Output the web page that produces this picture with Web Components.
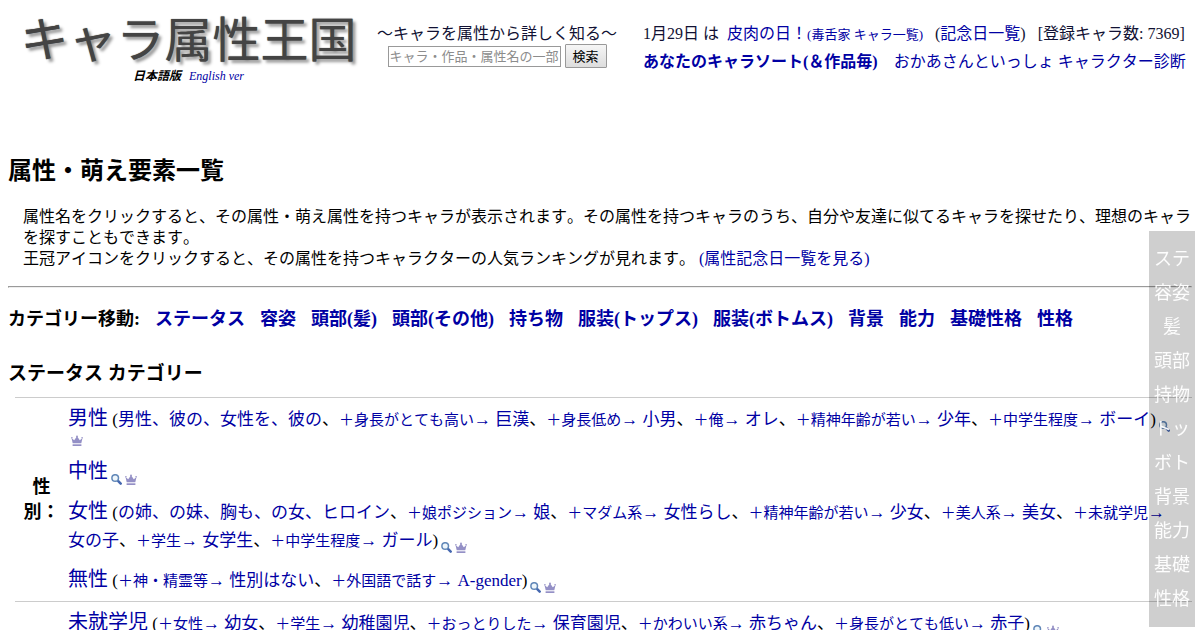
<!DOCTYPE html>
<html lang="ja">
<head>
<meta charset="utf-8">
<title>属性・萌え要素一覧</title>
<style>
  body {
    margin: 8px;
    color: #000;
    font-family: "Liberation Serif", "Noto Sans CJK JP", serif;
    font-size: 16px;
    font-kerning: none;
    line-height: 21px;
    text-spacing-trim: space-all;
    --link: #0000a3;
    --rule: #cccccc;
  }
  a {
    color: var(--link);
    text-decoration: none;
  }
  h1 {
    margin: 0 0 21px;
    font-size: 24px;
    line-height: 28px;
  }
  p {
    margin: 0 0 17px 15px;
  }
  hr {
    margin: 0 0 19px;
  }
</style>
</head>
<body>

<template id="headerTemplate">
  <style>
    :host {
      display: flex;
      min-height: 149px;
      white-space: nowrap;
      color: #111133;
    }
    .brand {
      flex: none;
      width: 361px;
      margin-right: 8px;
      text-align: center;
    }
    .info {
      flex: 1;
      min-width: 0;
      padding: 12px 0 0 26px;
      overflow: hidden;
      line-height: 27px;
    }
  </style>
  <div class="brand"><slot name="brand"></slot></div>
  <slot name="search"></slot>
  <div class="info"><slot></slot></div>
</template>

<template id="brandTemplate">
  <style>
    :host {
      display: block;
    }
    .logo {
      display: block;
      margin-bottom: 4px;
      color: #444444;
      font-family: "Noto Sans CJK JP", sans-serif;
      font-size: 48px;
      line-height: 56px;
      text-decoration: none;
      text-shadow: 0 0 1px #444444, 3px 3px 3px #999999;
    }
    .lang {
      font-size: 12px;
      font-style: italic;
      line-height: 16px;
    }
    .lang b {
      margin-right: 5px;
      color: #000;
    }
    .lang a {
      color: var(--link);
      text-decoration: none;
    }
  </style>
  <a class="logo" href="#">キャラ属性王国</a>
  <div class="lang"><b>日本語版</b> <a href="#">English ver</a></div>
</template>

<template id="searchTemplate">
  <style>
    :host {
      display: block;
      flex: none;
      padding-top: 15px;
      text-align: center;
    }
    label {
      display: block;
      line-height: 21px;
    }
    form {
      display: flex;
      justify-content: center;
      align-items: center;
      gap: 4px;
      margin: 0;
    }
    input, button {
      box-sizing: border-box;
      margin: 0;
      font: 13px/17px "Liberation Sans", "Noto Sans CJK JP", sans-serif;
    }
    input {
      width: 173px;
      height: 21px;
      padding: 1px;
      border: 1px solid #999999;
    }
    input::placeholder {
      color: #8c8c8c;
    }
    button {
      width: 42px;
      height: 24px;
      padding: 0;
      border: 1px solid #999999;
      border-radius: 1px;
      background: linear-gradient(#f6f6f6, #dddddd);
      color: #000;
    }
  </style>
  <label for="keyword">～キャラを属性から詳しく知る～</label>
  <form>
    <input id="keyword" type="text" placeholder="キャラ・作品・属性名の一部">
    <button type="button">検索</button>
  </form>
</template>

<template id="jumpTemplate">
  <style>
    :host {
      display: flex;
      flex-wrap: wrap;
      gap: 0 15px;
      margin-bottom: 31px;
      font-size: 18px;
      font-weight: bold;
      line-height: 24px;
    }
  </style>
  <span>カテゴリー移動:</span>
  <slot></slot>
</template>

<template id="sideTemplate">
  <style>
    :host {
      position: fixed;
      right: 5px;
      bottom: 3px;
      z-index: 2;
      width: 46px;
      padding: 11px 0;
      box-sizing: border-box;
      background: rgba(0, 0, 0, 0.19);
      font-size: 18px;
      line-height: 34px;
      text-align: center;
    }
    ::slotted(a) {
      display: block;
      color: rgba(255, 255, 255, 0.95) !important;
    }
  </style>
  <slot></slot>
</template>

<template id="entryTemplate">
  <style>
    /* no strut on the host, so a line with only an icon stays low */
    :host {
      display: block;
      line-height: 0;
    }
    .text {
      font-size: 17px;
      line-height: 28px;
    }
    a {
      color: var(--link);
      text-decoration: none;
    }
    .name {
      font-size: 20px;
    }
    .plus {
      font-size: 15px;
    }
    .icon {
      display: inline-block;
      height: 12px;
      margin-left: 3px;
      vertical-align: -8px;
    }
    svg {
      display: block;
    }
  </style>
  <span class="text"></span><a class="icon" href="#" aria-label="検索"><svg width="11" height="12" viewBox="0 0 11 12"><path d="M6.8 6.6L9.7 9.6" stroke="#4668b0" stroke-width="2.5" stroke-linecap="round"/><circle cx="4.2" cy="4" r="3.3" fill="#eef6fb" stroke="#6288b8" stroke-width="1.5"/></svg></a><wbr><a class="icon" href="#" aria-label="人気ランキング"><svg width="12" height="12" viewBox="0 0 12 12" fill="#9490c6"><path d="M0.5 3L3.2 5.2L6 1.2L8.8 5.2L11.5 3L10.3 8.2H1.7Z"/><circle cx="0.9" cy="2.8" r="0.8"/><circle cx="6" cy="1.4" r="0.9"/><circle cx="11.1" cy="2.8" r="0.8"/><path d="M1.6 9.3H10.4V11H1.6Z"/></svg></a>
</template>

<template id="groupTemplate">
  <style>
    :host {
      display: flex;
      flex-direction: column;
      gap: 10px;
    }
  </style>
  <slot></slot>
</template>

<template id="categoryTemplate">
  <style>
    :host {
      display: block;
    }
    h2 {
      margin: 0 0 11px;
      font-size: 19px;
      line-height: 24px;
    }
    .wrap {
      padding-left: 7px;
    }
    table {
      width: 100%;
      border-collapse: collapse;
    }
    tr {
      border-top: 1px solid var(--rule);
    }
    th {
      width: 53px;
      padding: 0;
      font-size: 18px;
      line-height: 25px;
    }
    td {
      padding: 6px 16px 6px 0;
    }
  </style>
  <h2><slot name="title"></slot></h2>
  <div class="wrap"><table><tbody></tbody></table></div>
</template>

<site-header>
  <site-brand slot="brand"></site-brand>
  <site-search slot="search"></site-search>
  <div>1月29日 は&nbsp; <a href="#">皮肉の日！<span style="font-size: 13px">(毒舌家 キャラ一覧)</span></a> &nbsp; (<a href="#">記念日一覧</a>) &nbsp; [登録キャラ数: 7369]</div>
  <div><a href="#"><b>あなたのキャラソート(＆作品毎)</b></a>　<a href="#">おかあさんといっしょ キャラクター診断</a></div>
</site-header>

<h1>属性・萌え要素一覧</h1>
<p>属性名をクリックすると、その属性・萌え属性を持つキャラが表示されます。その属性を持つキャラのうち、自分や友達に似てるキャラを探せたり、理想のキャラを探すこともできます。<br>
王冠アイコンをクリックすると、その属性を持つキャラクターの人気ランキングが見れます。 <a href="#">(属性記念日一覧を見る)</a></p>
<hr>

<category-jump>
  <a href="#status">ステータス</a>
  <a href="#">容姿</a>
  <a href="#">頭部(髪)</a>
  <a href="#">頭部(その他)</a>
  <a href="#">持ち物</a>
  <a href="#">服装(トップス)</a>
  <a href="#">服装(ボトムス)</a>
  <a href="#">背景</a>
  <a href="#">能力</a>
  <a href="#">基礎性格</a>
  <a href="#">性格</a>
</category-jump>

<attr-category id="status">
  <span slot="title">ステータス カテゴリー</span>
  <attr-group label="性別：">
    <attr-entry name="男性" alias="男性、彼の、女性を、彼の" plus="身長がとても高い>巨漢,身長低め>小男,俺>オレ,精神年齢が若い>少年,中学生程度>ボーイ"></attr-entry>
    <attr-entry name="中性"></attr-entry>
    <attr-entry name="女性" alias="の姉、の妹、胸も、の女、ヒロイン" plus="娘ポジション>娘,マダム系>女性らし,精神年齢が若い>少女,美人系>美女,未就学児>女の子,学生>女学生,中学生程度>ガール"></attr-entry>
    <attr-entry name="無性" plus="神・精霊等>性別はない,外国語で話す>A-gender"></attr-entry>
  </attr-group>
  <attr-group>
    <attr-entry name="未就学児" plus="女性>幼女,学生>幼稚園児,おっとりした>保育園児,かわいい系>赤ちゃん,身長がとても低い>赤子"></attr-entry>
  </attr-group>
</attr-category>

<side-nav>
  <a href="#status">ステ</a>
  <a href="#">容姿</a>
  <a href="#">髪</a>
  <a href="#">頭部</a>
  <a href="#">持物</a>
  <a href="#">トッ</a>
  <a href="#">ボト</a>
  <a href="#">背景</a>
  <a href="#">能力</a>
  <a href="#">基礎</a>
  <a href="#">性格</a>
</side-nav>

<script>
class TemplateElement extends HTMLElement {
  constructor(templateName) {
    super();
    const template = document.getElementById(templateName);
    const shadow = this.attachShadow({ mode: "open" });
    shadow.appendChild(template.content.cloneNode(true));
  }
}

class SiteHeader extends TemplateElement {
  constructor() {
    super("headerTemplate");
  }
}

class SiteBrand extends TemplateElement {
  constructor() {
    super("brandTemplate");
  }
}

class SiteSearch extends TemplateElement {
  constructor() {
    super("searchTemplate");
  }
}

class CategoryJump extends TemplateElement {
  constructor() {
    super("jumpTemplate");
  }
}

class SideNav extends TemplateElement {
  constructor() {
    super("sideTemplate");
  }
}

class AttrGroup extends TemplateElement {
  constructor() {
    super("groupTemplate");
  }
}

class AttrEntry extends TemplateElement {
  constructor() {
    super("entryTemplate");
  }

  connectedCallback() {
    const text = this.shadowRoot.querySelector(".text");
    const alias = this.getAttribute("alias");
    const plus = this.getAttribute("plus");
    const parts = [];

    if (alias) {
      parts.push(`<a href="#">${alias}</a>`);
    }
    if (plus) {
      plus.split(",").forEach((pair) => {
        const [condition, word] = pair.split(">");
        parts.push(
          `<a href="#"><span class="plus">＋${condition}</span>→ ${word}</a>`
        );
      });
    }

    text.innerHTML = `<a class="name" href="#">${this.getAttribute("name")}</a>`;
    if (parts.length) {
      text.innerHTML += ` (${parts.join("、")})`;
    }
  }
}

// one table row for each attr-group child
class AttrCategory extends TemplateElement {
  constructor() {
    super("categoryTemplate");
  }

  connectedCallback() {
    const tbody = this.shadowRoot.querySelector("tbody");
    tbody.innerHTML = "";
    this.querySelectorAll("attr-group").forEach((group, i) => {
      group.slot = "group" + i;
      const row = document.createElement("tr");
      const label = document.createElement("th");
      label.scope = "row";
      label.innerText = group.getAttribute("label") || "";
      const cell = document.createElement("td");
      cell.innerHTML = `<slot name="group${i}"></slot>`;
      row.append(label, cell);
      tbody.appendChild(row);
    });
  }
}

customElements.define("site-header", SiteHeader);
customElements.define("site-brand", SiteBrand);
customElements.define("site-search", SiteSearch);
customElements.define("category-jump", CategoryJump);
customElements.define("side-nav", SideNav);
customElements.define("attr-group", AttrGroup);
customElements.define("attr-entry", AttrEntry);
customElements.define("attr-category", AttrCategory);
</script>
</body>
</html>
